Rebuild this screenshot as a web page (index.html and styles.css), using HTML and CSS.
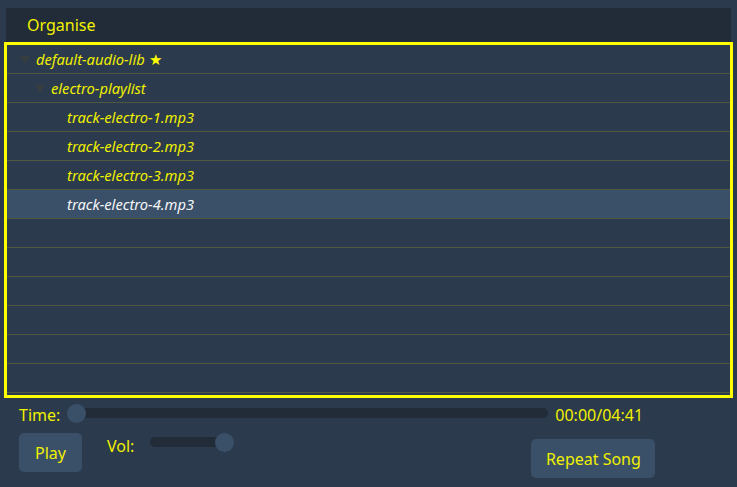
FILE: index.html
```html
<!DOCTYPE html>
<html>
<head>
<meta charset="utf-8">
<link rel="stylesheet" href="styles.css">
</head>
<body>
<div class="app">
  <div class="header">Organise</div>
  <div class="tree">
    <div class="row lvl0"><span class="caret"></span><span class="label">default-audio-lib</span><span class="star">★</span></div>
    <div class="row lvl1"><span class="caret"></span><span class="label">electro-playlist</span></div>
    <div class="row lvl2"><span class="label">track-electro-1.mp3</span></div>
    <div class="row lvl2"><span class="label">track-electro-2.mp3</span></div>
    <div class="row lvl2"><span class="label">track-electro-3.mp3</span></div>
    <div class="row lvl2 selected"><span class="label">track-electro-4.mp3</span></div>
    <div class="row"></div>
    <div class="row"></div>
    <div class="row"></div>
    <div class="row"></div>
    <div class="row"></div>
    <div class="row"></div>
  </div>
  <div class="controls">
    <div class="time-row">
      <span class="lbl time-lbl">Time:</span>
      <div class="slider time-slider"><span class="thumb"></span><span class="track"></span></div>
      <span class="lbl time-val">00:00/04:41</span>
    </div>
    <div class="btn-row">
      <button class="btn play">Play</button>
      <span class="lbl vol-lbl">Vol:</span>
      <div class="slider vol-slider"><span class="track"></span><span class="thumb"></span></div>
      <button class="btn repeat">Repeat Song</button>
    </div>
  </div>
</div>
</body>
</html>
```
FILE: styles.css
```css
html, body {
  margin: 0;
  padding: 0;
  background: #2b3a4c;
  width: 737px;
  height: 487px;
  overflow: hidden;
  font-family: "Noto Sans", "Open Sans", sans-serif;
}
.app {
  padding: 8px 6px 0 6px;
}
.header {
  height: 34px;
  background: #222c39;
  color: #f2f200;
  font-size: 16px;
  line-height: 34px;
  padding-left: 21px;
}
.tree {
  margin: 0 -2px;
  border: 3px solid #ffff00;
  padding-bottom: 2px;
}
.row {
  height: 28px;
  border-bottom: 1px solid #4f5840;
  display: flex;
  align-items: center;
  font-style: italic;
  font-size: 14.7px;
  color: #f0f000;
}
.row.selected {
  background: #3a5068;
  color: #f4f6f8;
}
.lvl0 { padding-left: 13px; }
.lvl1 { padding-left: 28px; }
.lvl2 { padding-left: 60px; }
.caret {
  width: 0;
  height: 0;
  border-left: 5px solid transparent;
  border-right: 5px solid transparent;
  border-top: 8px solid #363e40;
  margin-right: 6px;
  margin-top: 1px;
}
.star {
  font-style: normal;
  color: #ffff00;
  margin-left: 4px;
  font-size: 15px;
}
.controls {
  padding: 4px 13px 0 13px;
}
.lbl {
  color: #f0f000;
  font-size: 16px;
}
.time-lbl, .time-val { margin-top: 3px; }
.time-row {
  display: flex;
  align-items: center;
  height: 22px;
}
.slider {
  position: relative;
  display: flex;
  align-items: center;
  height: 20px;
}
.track {
  flex: 1;
  height: 10px;
  border-radius: 5px;
  background: #222c39;
}
.thumb {
  width: 19px;
  height: 19px;
  border-radius: 50%;
  background: #3a5068;
  flex: none;
}
.time-slider {
  width: 481px;
  margin: 0 7px;
}
.time-slider .thumb { margin-right: -10px; position: relative; z-index: 1; }
.btn-row {
  display: flex;
  align-items: flex-start;
  margin-top: 9px;
}
.btn {
  background: #3a5068;
  border: none;
  border-radius: 5px;
  color: #f0f000;
  font-family: inherit;
  font-size: 16px;
  height: 39px;
  padding: 0;
}
.play { width: 63px; }
.vol-lbl { margin-left: 25px; margin-top: 2px; }
.vol-slider {
  width: 84px;
  margin-left: 16px;
  margin-top: -1px;
}
.vol-slider .thumb { margin-left: -10px; }
.repeat {
  width: 124px;
  margin-left: 297px;
  margin-top: 6px;
}
```
